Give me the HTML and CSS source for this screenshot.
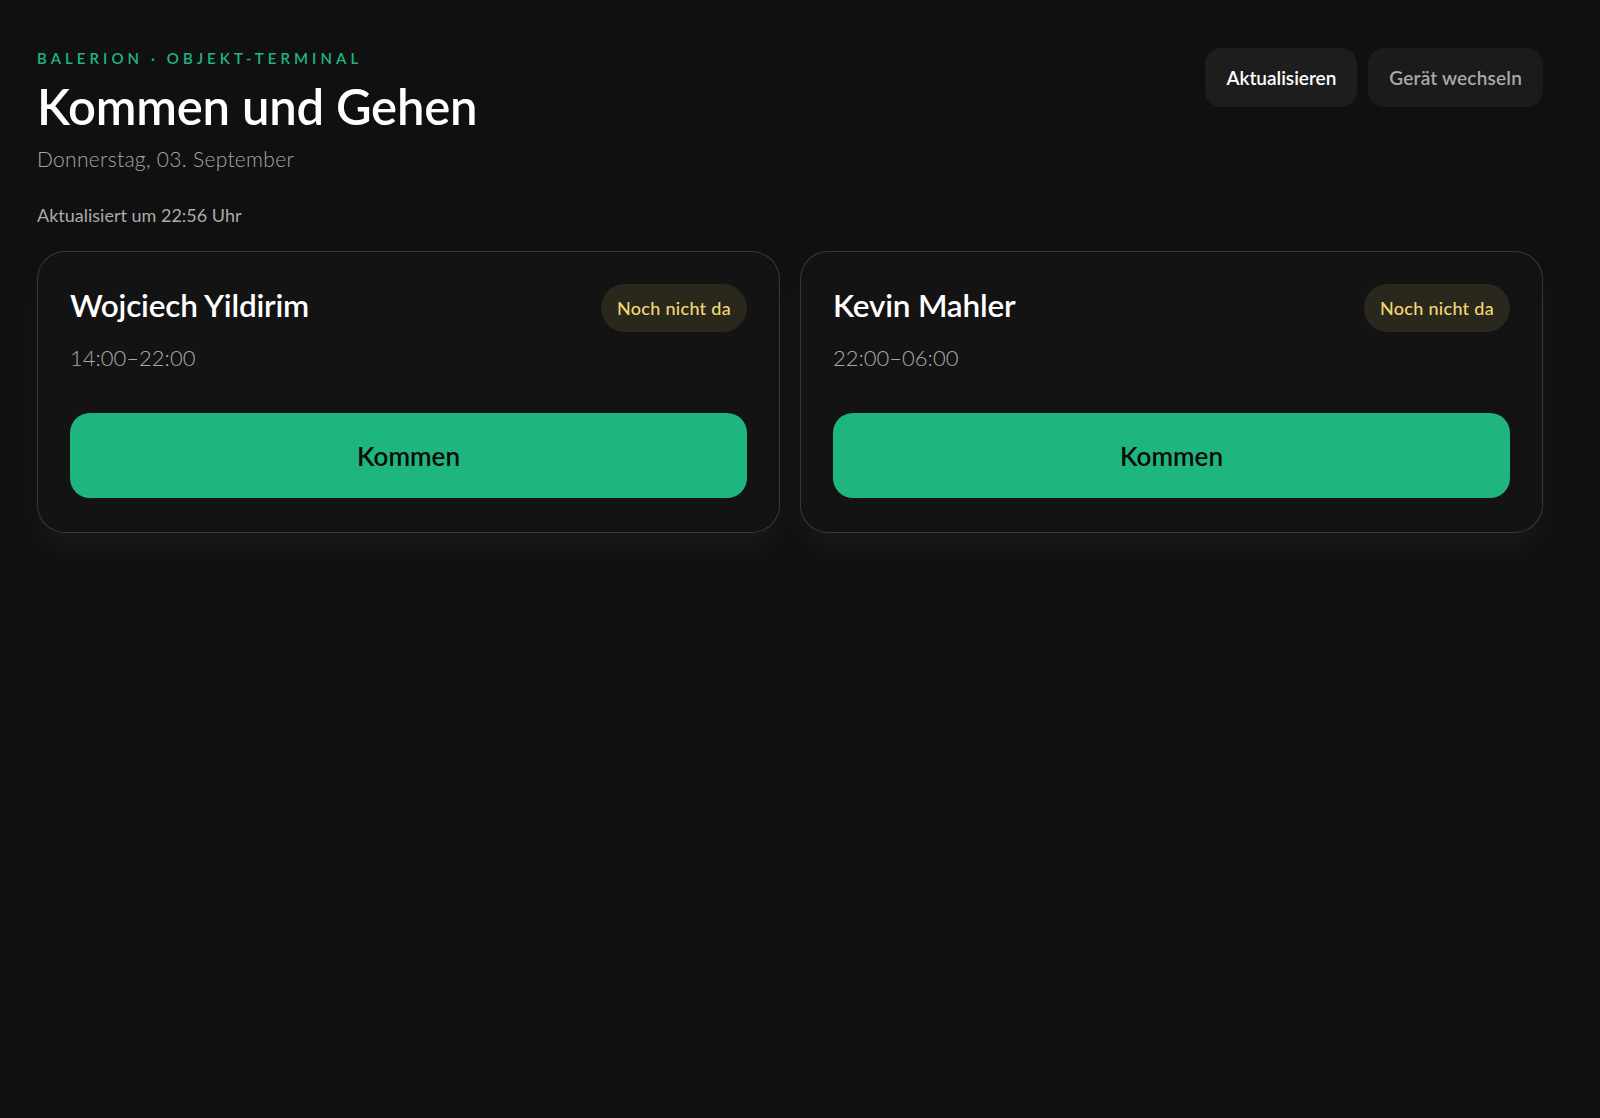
FILE: index.html
```html
<!DOCTYPE html>
<html lang="de">
<head>
  <meta charset="UTF-8">
  <meta name="viewport" content="width=device-width, initial-scale=1.0">
  <title>Kommen und Gehen</title>
  <link rel="stylesheet" href="styles.css">
</head>
<body>
  <div class="page">
    <header class="top">
      <div class="heading">
        <div class="eyebrow">Balerion · Objekt-Terminal</div>
        <h1>Kommen und Gehen</h1>
        <div class="date">Donnerstag, 03. September</div>
      </div>
      <div class="actions">
        <button class="btn btn-primary">Aktualisieren</button>
        <button class="btn btn-muted">Gerät wechseln</button>
      </div>
    </header>

    <p class="updated">Aktualisiert um 22:56 Uhr</p>

    <!-- Shift cards -->
    <div class="shift-list">
      <div class="shift-card">
        <div class="shift-head">
          <h2 class="shift-name">Wojciech Yildirim</h2>
          <span class="badge">Noch nicht da</span>
        </div>
        <div class="shift-time">14:00–22:00</div>
        <button class="checkin">Kommen</button>
      </div>
      <div class="shift-card">
        <div class="shift-head">
          <h2 class="shift-name">Kevin Mahler</h2>
          <span class="badge">Noch nicht da</span>
        </div>
        <div class="shift-time">22:00–06:00</div>
        <button class="checkin">Kommen</button>
      </div>
    </div>
  </div>
</body>
</html>
```

FILE: styles.css
```css
/* General styles */
body {
  margin: 0;
  padding: 0;
  font-family: 'Lato', 'Noto Sans', sans-serif;
  background: #101010;
  color: #fff;
  min-height: 100vh;
}

.page {
  padding: 48px 57px 48px 37px;
}

/* Header */
.top {
  display: flex;
  justify-content: space-between;
  align-items: flex-start;
}

.eyebrow {
  font-size: 15px;
  line-height: 20px;
  font-weight: 600;
  letter-spacing: 0.27em;
  text-transform: uppercase;
  color: #1fb57f;
}

h1 {
  margin: 12px 0 0;
  font-size: 49px;
  line-height: 52px;
  font-weight: 600;
  letter-spacing: -0.2px;
}

.date {
  margin-top: 14px;
  font-size: 21px;
  line-height: 26px;
  letter-spacing: 0.3px;
  color: #a6a6a6;
  font-weight: 300;
}

.actions {
  display: flex;
  gap: 11px;
}

.btn {
  height: 59px;
  padding: 0 21px;
  border: none;
  border-radius: 16px;
  background: #1d1d1d;
  font-family: inherit;
  font-size: 19px;
  font-weight: 600;
  cursor: pointer;
}

.btn-primary {
  color: #fff;
}

.btn-muted {
  color: #a9a9a9;
  background: #1b1b1b;
  letter-spacing: 0.2px;
}

.updated {
  margin: 32px 0 25px;
  font-size: 18px;
  line-height: 22px;
  color: #ababab;
  font-weight: 400;
}

/* Shift cards */
.shift-list {
  display: grid;
  grid-template-columns: 1fr 1fr;
  gap: 20px;
}

.shift-card {
  background: #131313;
  border: 1px solid rgba(255, 255, 255, 0.16);
  border-radius: 28px;
  padding: 32px 32px 34px;
  box-shadow: 0 20px 36px -6px rgba(255, 255, 255, 0.05);
}

.shift-head {
  display: flex;
  justify-content: space-between;
  align-items: center;
}

.shift-name {
  margin: 0 0 6px;
  font-size: 31.5px;
  font-weight: 600;
  letter-spacing: -0.2px;
}

.badge {
  display: inline-flex;
  align-items: center;
  height: 48px;
  padding: 0 16px;
  border-radius: 24px;
  background: #2a271c;
  color: #f3d771;
  font-size: 18px;
  letter-spacing: 0.3px;
  font-weight: 500;
}

.shift-time {
  margin-top: 12px;
  font-size: 22px;
  line-height: 28px;
  color: #a9a9a9;
  font-weight: 300;
}

.checkin {
  display: block;
  width: 100%;
  height: 85px;
  margin-top: 41px;
  border: none;
  border-radius: 20px;
  background: #1fb57f;
  color: #0b0b0b;
  font-family: inherit;
  font-size: 26px;
  font-weight: 600;
  cursor: pointer;
}

.checkin:hover {
  background: #22c08a;
}
```
